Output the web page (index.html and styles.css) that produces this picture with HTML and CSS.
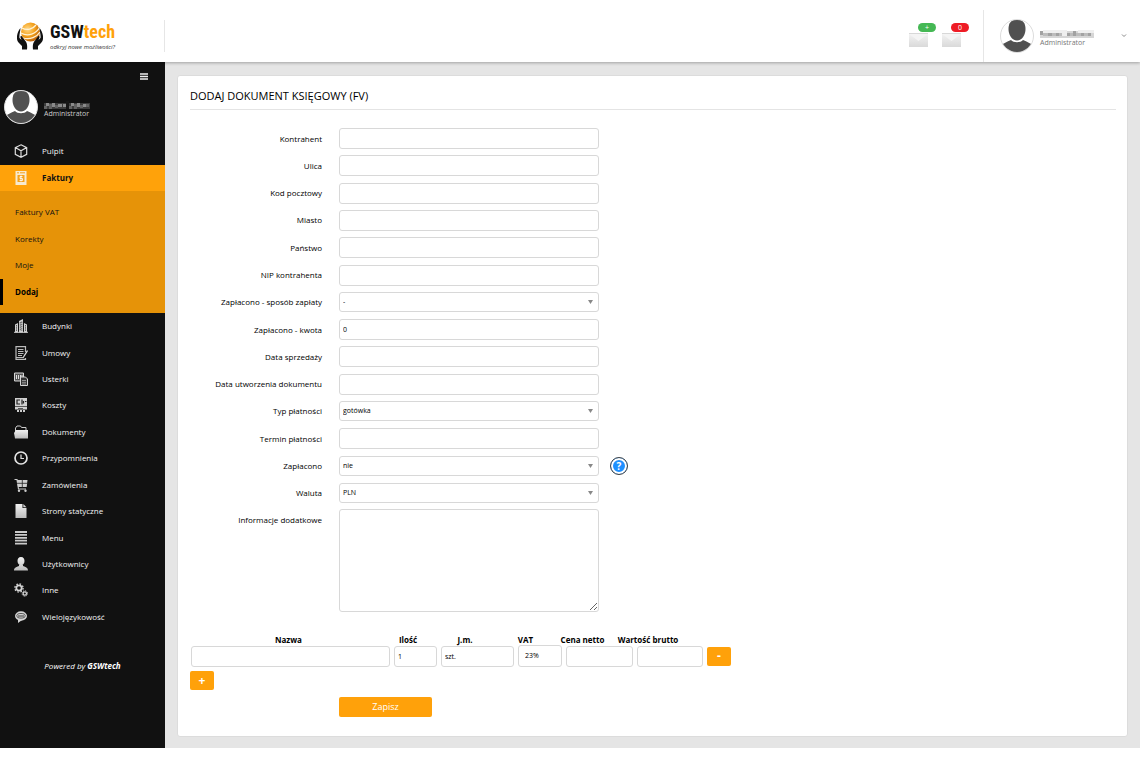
FILE: index.html
```html
<!DOCTYPE html>
<html lang="pl">
<head>
<meta charset="utf-8">
<title>GSWtech - Dodaj dokument księgowy</title>
<link rel="stylesheet" href="styles.css">
</head>
<body>
<svg class="defs" aria-hidden="true">
  <defs>
    <linearGradient id="steel" x1="0" y1="0" x2="0" y2="1"><stop offset="0" stop-color="#f2f2f2"/><stop offset="1" stop-color="#bdbdbd"/></linearGradient>
    <linearGradient id="paper" x1="0" y1="0" x2="0" y2="1"><stop offset="0" stop-color="#f2f2f2"/><stop offset="1" stop-color="#d9d9d9"/></linearGradient>
    <radialGradient id="globe" cx=".35" cy=".35" r=".75"><stop offset="0" stop-color="#ffd98a"/><stop offset=".5" stop-color="#f5a21c"/><stop offset="1" stop-color="#b25608"/></radialGradient>
    <clipPath id="disc"><circle cx="17" cy="17" r="16"/></clipPath>
    <symbol id="avatar" viewBox="0 0 34 34">
      <circle cx="17" cy="17" r="16.500" fill="#fff" stroke="#dcdcdc"/>
      <g clip-path="url(#disc)" fill="#505050"><path d="M17 .5c6 0 8.500 4 8.500 9.500 0 6-3.500 11.500-8.500 11.500S8.500 16 8.500 10C8.500 4.500 11 .5 17 .5z"/><path d="M1 27c2-3 6-4 10-6 2.500 3 9.500 3 12 0 4 2 8 3 10 6v7H1z"/></g>
    </symbol>
    <symbol id="envelope" viewBox="0 0 19 14"><path d="M0 0h19v14H0z" fill="#f4f4f4"/><path d="M0 1l9.500 7L19 1v13H0z" fill="url(#paper)"/><path d="M0 .5h19" stroke="#d8d8d8"/></symbol>
  </defs>
</svg>

<header class="topbar">
  <a class="logo" href="#">
    <svg class="logo-mark" viewBox="0 0 26 28" aria-hidden="true">
      <circle cx="13.500" cy="10" r="9.500" fill="url(#globe)"/>
      <path d="M5 6c5 3 11 1 14-3M4 11c7 4 15 1 19-6M6 16c7 2 14-1 17-6" fill="none" stroke="#fff3d6" stroke-width="1.300"/>
      <path d="M3.500 6c-2 2-3 5-3.500 8-.2 3 0 5 2 7l3 3v3.500h5c.5-4 0-7-2-9l-3-4c-1-1-2 0-1.500 1l1 2.500-2-2c-.5-3 1-7 1-10zM22.500 6c2 2 3 5 3.500 8 .2 3 0 5-2 7l-3 3v3.500h-5c-.5-4 0-7 2-9l3-4c1-1 2 0 1.500 1l-1 2.500 2-2c.5-3-1-7-1-10z" fill="#111"/>
    </svg>
    <span class="logo-words">
      <span class="logo-name">GSW<span class="logo-accent">tech</span></span>
      <span class="logo-tagline">odkryj nowe możliwości?</span>
    </span>
  </a>
  <div class="topbar-actions">
    <button class="mail" type="button" aria-label="Nowa wiadomość"><svg viewBox="0 0 19 14"><use href="#envelope"/></svg><span class="badge badge-green">+</span></button>
    <button class="mail" type="button" aria-label="Wiadomości"><svg viewBox="0 0 19 14"><use href="#envelope"/></svg><span class="badge badge-red">0</span></button>
  </div>
  <button class="account" type="button" aria-label="Konto">
    <svg class="avatar" viewBox="0 0 34 34"><use href="#avatar"/></svg>
    <span class="who">
      <svg class="mosaic mosaic-wide" viewBox="0 0 54 8" aria-hidden="true"><path d="M0 1h54v7H0z" fill="#d6d6d6"/><path d="M0 1h3v4H0zM8 3h4v3H8zM16 3h3v3h-3zM27 3h3v3h-3zM33 1h3v5h-3zM41 3h3v3h-3zM48 3h3v3h-3z" fill="#a2a2a2"/><path d="M3 3h5v3H3zM12 3h4v3h-4zM19 3h3v3h-3zM30 3h3v3h-3zM36 3h5v3h-5zM44 3h4v3h-4z" fill="#bcbcbc"/><path d="M3 0h19v3H3zM22 0h5v6h-5zM38 0h16v3H38z" fill="#efefef"/></svg>
      <span class="role">Administrator</span>
    </span>
    <svg class="caret" viewBox="0 0 6 4" aria-hidden="true"><path d="M1 .5l2 2 2-2" fill="none" stroke="#888"/></svg>
  </button>
</header>

<div class="layout">
  <aside class="sidebar">
    <button class="burger" type="button" aria-label="Zwiń menu"><svg viewBox="0 0 8 7"><path d="M0 1h8M0 3.500h8M0 6h8" stroke="#eee" stroke-width="1.300"/></svg></button>
    <div class="profile">
      <svg class="avatar" viewBox="0 0 34 34"><use href="#avatar"/></svg>
      <span class="who">
        <svg class="mosaic" viewBox="0 0 46 8" aria-hidden="true"><path d="M0 2h46v6H0z" fill="#3c3c3c"/><path d="M2 2h3v3H2zM8 2h3v4H8zM14 3h4v3h-4zM19 3h3v3h-3zM27 2h3v3h-3zM33 2h3v4h-3zM39 3h3v3h-3z" fill="#8a8a8a"/><path d="M0 5h3v3H0zM5 3h3v5H5zM11 4h3v3h-3zM25 5h3v3h-3zM30 3h3v5h-3zM36 4h3v3h-3zM42 3h3v3h-3z" fill="#626262"/><path d="M22 0h3v8h-3z" fill="#161616"/></svg>
        <span class="role">Administrator</span>
      </span>
    </div>
    <nav>
      <ul class="menu">
        <li><a href="#"><svg viewBox="0 0 14 14"><path d="M7 .8l5.700 2.800v6.800L7 13.300 1.300 10.400V3.600zM1.300 3.600L7 6.800l5.700-3.200M7 6.800v6.400" fill="none" stroke="#ddd" stroke-width="1.200"/></svg>Pulpit</a></li>
        <li><a class="active" href="#"><svg viewBox="0 0 14 14"><path d="M1.500 0h11v14h-11z" fill="#f7ead0"/><path d="M3 1.800h2M6 1.800h5" stroke="#f5a21c"/><path d="M3.500 4h7v7h-7z" fill="#f5a21c"/><path d="M8.500 5.500h-2.500v2h2.500v2H5.500M7 4.500v6" stroke="#fff" fill="none" stroke-width=".8"/></svg>Faktury</a></li>
      </ul>
      <ul class="submenu">
        <li><a href="#">Faktury VAT</a></li>
        <li><a href="#">Korekty</a></li>
        <li><a href="#">Moje</a></li>
        <li><a class="current" href="#">Dodaj</a></li>
      </ul>
      <ul class="menu menu-long">
        <li><a href="#"><svg viewBox="0 0 14 14"><path d="M1 5.500l3-1.500v9.500H1zM5 2l4-2v13.500H5zM10 4l3 1.500v8h-3z" fill="#cfcfcf"/><path d="M2.500 6v6M6.300 3v9M7.800 2.500v9.500M11.500 6v6" stroke="#222" stroke-width=".7" stroke-dasharray="1.500 .7"/><path d="M0 13.300h14" stroke="#cfcfcf"/></svg>Budynki</a></li>
        <li><a href="#"><svg viewBox="0 0 14 14"><path d="M11.500 6V.7H2v12.600h9.500V12" fill="none" stroke="#bbb" stroke-width="1.200"/><path d="M4 3.500h5.500M4 5.500h5.500M4 7.500h5.500M4 9.500h4M2 11.500h8" stroke="#bbb"/><path d="M13.500 4.500l-4 6.500" stroke="#ddd" stroke-width="1.300"/></svg>Umowy</a></li>
        <li><a href="#"><svg viewBox="0 0 14 14"><path d="M.5 1h9v8h-9z" fill="#555" stroke="#d5d5d5"/><path d="M2.500 3v4M4.500 3v4M6.500 3v4M8 3v2" stroke="#ddd"/><path d="M6.500 5h5l2 2v6.500h-7z" fill="#333" stroke="#d5d5d5"/><path d="M8 8.500h4M8 10.300h4M8 12h4" stroke="#aaa" stroke-width=".8"/></svg>Usterki</a></li>
        <li><a href="#"><svg viewBox="0 0 14 14"><path d="M1 0h12v11.500H1z" fill="#d0d0d0"/><path d="M6 2h-3v4h3M8 1.500v5M9.500 3v2.500M11 3.500h1.500" fill="none" stroke="#222" stroke-width="1.200"/><path d="M3 13h8" stroke="#ccc" stroke-width="1.800" stroke-dasharray="2 1"/><path d="M1 8.500h12M4 10.500h5" stroke="#222" stroke-width=".7"/></svg>Koszty</a></li>
        <li><a href="#"><svg viewBox="0 0 14 14"><path d="M1.500 7V3L3 1h3.500l1 1.500h4.500V6" fill="none" stroke="#ccc"/><path d="M2 5h12v8.500H1L0 8z" fill="url(#steel)"/></svg>Dokumenty</a></li>
        <li><a href="#"><svg viewBox="0 0 14 14"><circle cx="7" cy="7" r="6" fill="none" stroke="#e4e4e4" stroke-width="1.700"/><path d="M7 3.500v4h3" fill="none" stroke="#e4e4e4" stroke-width="1.200"/></svg>Przypomnienia</a></li>
        <li><a href="#"><svg viewBox="0 0 14 14"><path d="M.5 1.500h2.500L4.500 11H12" fill="none" stroke="#ccc" stroke-width="1.200"/><path d="M3 2h10.500l-.8 7H4z" fill="#d0d0d0"/><path d="M3 5.300h10.500M8.300 1.500v8" stroke="#222" stroke-width=".8"/><circle cx="5" cy="12.700" r="1.200" fill="#ccc"/><circle cx="11.500" cy="12.700" r="1.200" fill="#ccc"/></svg>Zamówienia</a></li>
        <li><a href="#"><svg viewBox="0 0 14 14"><path d="M1.500 0h7v4h4v10h-11z" fill="url(#steel)"/><path d="M9.300 0l3.200 3.200H9.300z" fill="#d5d5d5"/></svg>Strony statyczne</a></li>
        <li><a href="#"><svg viewBox="0 0 14 14"><path d="M1 1h12M1 3.900h12M1 6.800h12M1 9.700h12M1 12.600h12" stroke="#c9c9c9" stroke-width="1.800"/></svg>Menu</a></li>
        <li><a href="#"><svg viewBox="0 0 14 14"><path d="M7 0c2.500 0 3.500 1.800 3.500 4S9 8.500 7 8.500 3.500 6.200 3.500 4 4.500 0 7 0zM0 13.500c0-2 1-3 5-4.500v-1h4v1c4 1.500 5 2.500 5 4.500z" fill="url(#steel)"/></svg>Użytkownicy</a></li>
        <li><a href="#"><svg viewBox="0 0 14 14" fill="none" stroke="#d5d5d5"><circle cx="5" cy="5" r="2.700" stroke-width="1.800"/><circle cx="5" cy="5" r="4.100" stroke-width="1.300" stroke-dasharray="1.600 1.620"/><circle cx="10.800" cy="10.500" r="1.700" stroke-width="1.300"/><circle cx="10.800" cy="10.500" r="2.700" stroke-dasharray="1.100 1.020"/></svg>Inne</a></li>
        <li><a href="#"><svg viewBox="0 0 14 14"><ellipse cx="7" cy="6" rx="6" ry="4.700" fill="#d5d5d5"/><path d="M4 9.500v3.500l4-3z" fill="#d5d5d5"/><ellipse cx="7" cy="5.800" rx="4.200" ry="2.300" fill="none" stroke="#333" stroke-width=".8"/><path d="M4 6h6" stroke="#333"/></svg>Wielojęzykowość</a></li>
      </ul>
    </nav>
    <p class="powered">Powered by <strong>GSWtech</strong></p>
  </aside>

  <main class="content">
    <form class="panel">
      <h1>Dodaj dokument księgowy (FV)</h1>
      <div class="fields">
        <label for="f1">Kontrahent</label><input id="f1" type="text">
        <label for="f2">Ulica</label><input id="f2" type="text">
        <label for="f3">Kod pocztowy</label><input id="f3" type="text">
        <label for="f4">Miasto</label><input id="f4" type="text">
        <label for="f5">Państwo</label><input id="f5" type="text">
        <label for="f6">NIP kontrahenta</label><input id="f6" type="text">
        <label for="f7">Zapłacono - sposób zapłaty</label>
        <div class="picker"><select id="f7"><option>-</option></select><svg viewBox="0 0 5 4" aria-hidden="true"><path d="M0 0h5L2.500 4z"/></svg></div>
        <label for="f8">Zapłacono - kwota</label><input id="f8" type="text" value="0">
        <label for="f9">Data sprzedaży</label><input id="f9" type="text">
        <label for="f10">Data utworzenia dokumentu</label><input id="f10" type="text">
        <label for="f11">Typ płatności</label>
        <div class="picker"><select id="f11"><option>gotówka</option></select><svg viewBox="0 0 5 4" aria-hidden="true"><path d="M0 0h5L2.500 4z"/></svg></div>
        <label for="f12">Termin płatności</label><input id="f12" type="text">
        <label for="f13">Zapłacono</label>
        <div class="picker"><select id="f13"><option>nie</option></select><svg viewBox="0 0 5 4" aria-hidden="true"><path d="M0 0h5L2.500 4z"/></svg></div>
        <button class="help" type="button" aria-label="Pomoc">?</button>
        <label for="f14">Waluta</label>
        <div class="picker"><select id="f14"><option>PLN</option></select><svg viewBox="0 0 5 4" aria-hidden="true"><path d="M0 0h5L2.500 4z"/></svg></div>
      </div>
      <div class="notes">
        <label for="f15">Informacje dodatkowe</label><textarea id="f15"></textarea>
      </div>
      <table class="items">
        <thead><tr><th>Nazwa</th><th>Ilość</th><th>J.m.</th><th>VAT</th><th>Cena netto</th><th>Wartość brutto</th></tr></thead>
        <tbody><tr>
          <td><input type="text" aria-label="Nazwa"></td>
          <td><input type="text" aria-label="Ilość" value="1"></td>
          <td><input type="text" aria-label="J.m." value="szt."></td>
          <td><select aria-label="VAT"><option>23%</option></select></td>
          <td><input type="text" aria-label="Cena netto"></td>
          <td><input type="text" aria-label="Wartość brutto"></td>
          <td><button class="btn btn-small" type="button" aria-label="Usuń pozycję">-</button></td>
        </tr></tbody>
      </table>
      <button class="btn btn-small" type="button" aria-label="Dodaj pozycję">+</button>
      <div class="submit"><button class="btn btn-save" type="submit">Zapisz</button></div>
    </form>
  </main>
</div>
</body>
</html>
```
FILE: styles.css
```css
* { box-sizing: border-box; }

body {
  margin: 0;
  background: #fff;
  color: #000;
  font: 8px/12px "Open Sans", sans-serif;
}

button, input, select, textarea { font: inherit; color: inherit; margin: 0; }
button { border: 0; padding: 0; background: none; cursor: pointer; }
svg { display: block; flex: none; }
a { color: inherit; text-decoration: none; }
ul { list-style: none; margin: 0; padding: 0; }
.defs { position: absolute; width: 0; height: 0; }

/* Top bar */
.topbar {
  position: relative;
  display: flex;
  align-items: center;
  height: 62px;
  padding-top: 10px;
  background: #fff;
  box-shadow: 0 1px 3px rgba(0, 0, 0, .3);
}
.logo {
  display: flex;
  align-items: center;
  gap: 7px;
  width: 165px;
  height: 32px;
  padding-left: 17px;
  border-right: 1px solid #e6e6e6;
}
.logo-mark { width: 26px; height: 28px; }
.logo-words { display: flex; flex-direction: column; }
.logo-name {
  font: bold 18px/22px "Liberation Sans Narrow", "Roboto Condensed", "Open Sans Condensed", "DejaVu Sans Condensed", sans-serif;
  color: #111;
}
.logo-accent { color: #ffa10a; }
.logo-tagline { font: italic 6px/8px "Open Sans", sans-serif; color: #333; }
.topbar-actions { display: flex; gap: 14px; margin-left: auto; padding-right: 22px; }
.mail { position: relative; width: 19px; padding-top: 8px; }
.mail svg { width: 19px; height: 14px; }
.badge {
  position: absolute;
  top: -2px;
  left: 9px;
  width: 18px;
  border-radius: 5px;
  color: #fff;
  font-size: 7px;
  line-height: 9px;
}
.badge-green { background: #45b854; }
.badge-red { background: #ee1c25; }
.account {
  display: flex;
  align-items: center;
  align-self: stretch;
  gap: 6px;
  width: 157px;
  padding: 0 13px 0 16px;
  border-left: 1px solid #e6e6e6;
  text-align: left;
}
.avatar { width: 34px; height: 34px; }
.who { display: flex; flex-direction: column; padding-top: 6px; }
.role { font-size: 7px; line-height: 10px; color: #777; }
.mosaic { width: 46px; height: 8px; }
.mosaic-wide { width: 54px; }
.caret { width: 6px; height: 4px; margin-left: auto; }

/* Sidebar */
.layout { display: flex; align-items: stretch; }
.sidebar { flex: none; width: 165px; background: #111; color: #f4f4f4; }
.burger { display: block; margin: 11px 17px 10px auto; }
.burger svg { width: 8px; height: 7px; }
.profile { display: flex; align-items: center; gap: 6px; padding: 0 4px 14px; }
.profile .role { color: #ccc; }
.menu { display: grid; grid-auto-rows: 1fr; min-height: 53px; }
.menu-long { min-height: 317px; }
.menu a { display: flex; align-items: center; gap: 14px; height: 100%; padding-left: 14px; }
.menu svg { width: 14px; height: 14px; }
.menu .active { background: #ffa20a; color: #111; font-weight: bold; }
.submenu {
  display: grid;
  grid-auto-rows: 1fr;
  min-height: 122px;
  padding: 8px 0;
  background: #e69308;
  color: #111;
}
.submenu a { display: flex; align-items: center; height: 100%; padding-left: 15px; }
.submenu .current { padding-left: 12px; border-left: 3px solid #000; color: #000; font-weight: bold; }
.powered { margin: 30px 0 0; text-align: center; font-style: italic; color: #fff; }

/* Form panel */
.content { flex: 1; min-width: 0; padding: 13px 12px 11px; background: #e5e5e5; }
.panel {
  padding: 12px 11px 19px 12px;
  background: #fff;
  border: 1px solid #dcdcdc;
  border-radius: 3px;
}
h1 {
  margin: 0 0 15px;
  padding-bottom: 6px;
  border-bottom: 1px solid #e4e4e4;
  font-size: 11px;
  font-weight: normal;
  line-height: 15px;
  text-transform: uppercase;
}
.fields {
  display: grid;
  grid-template-columns: 132px 260px 18px;
  grid-auto-rows: 1fr;
  align-items: center;
  column-gap: 17px;
  min-height: 382px;
}
.fields label, .notes label { grid-column: 1; text-align: right; }
input, select, textarea {
  display: block;
  width: 100%;
  padding: 0 3px;
  background: #fff;
  border: 1px solid #d8d8d8;
  border-radius: 3px;
  font-size: 7px;
}
input { height: 21px; }
select { height: 20px; appearance: none; }
.picker { display: grid; align-items: center; }
.picker select, .picker svg { grid-area: 1 / 1; }
.picker svg { justify-self: end; width: 5px; height: 4px; margin-right: 6px; fill: #888; pointer-events: none; }
.help {
  grid-column: 3;
  width: 18px;
  height: 18px;
  margin-left: -6px;
  border: 1px solid #444;
  border-radius: 50%;
  background: #1e90ff;
  box-shadow: inset 0 0 0 2px #fff;
  color: #fff;
  font-size: 10px;
  font-weight: bold;
}
.notes { display: grid; grid-template-columns: 132px 260px; column-gap: 17px; padding-top: 2px; }
.notes label { padding-top: 5px; }
.notes textarea { height: 103px; resize: vertical; }

/* Invoice lines */
.items { display: block; margin: 23px 0 4px; padding-left: 1px; }
.items thead, .items tbody { display: block; }
.items tr { display: grid; align-items: center; }
.items thead tr { grid-template-columns: 195px 44px 70px 51px 63px 68px; }
.items tbody tr { grid-template-columns: 199px 43px 73px 44px 67px 66px 24px; column-gap: 4px; }
.items th { padding: 0; white-space: nowrap; line-height: 10px; }
.items td { padding: 0; }
.items select { height: 22px; padding-left: 6px; }
.btn {
  display: block;
  border-radius: 2px;
  background: #ffa10a;
  color: #fff;
}
.btn-small { width: 24px; height: 19px; font-size: 12px; font-weight: bold; }
.btn-save { width: 93px; height: 20px; font-size: 9px; }
.submit { padding: 7px 0 0 149px; }
```
